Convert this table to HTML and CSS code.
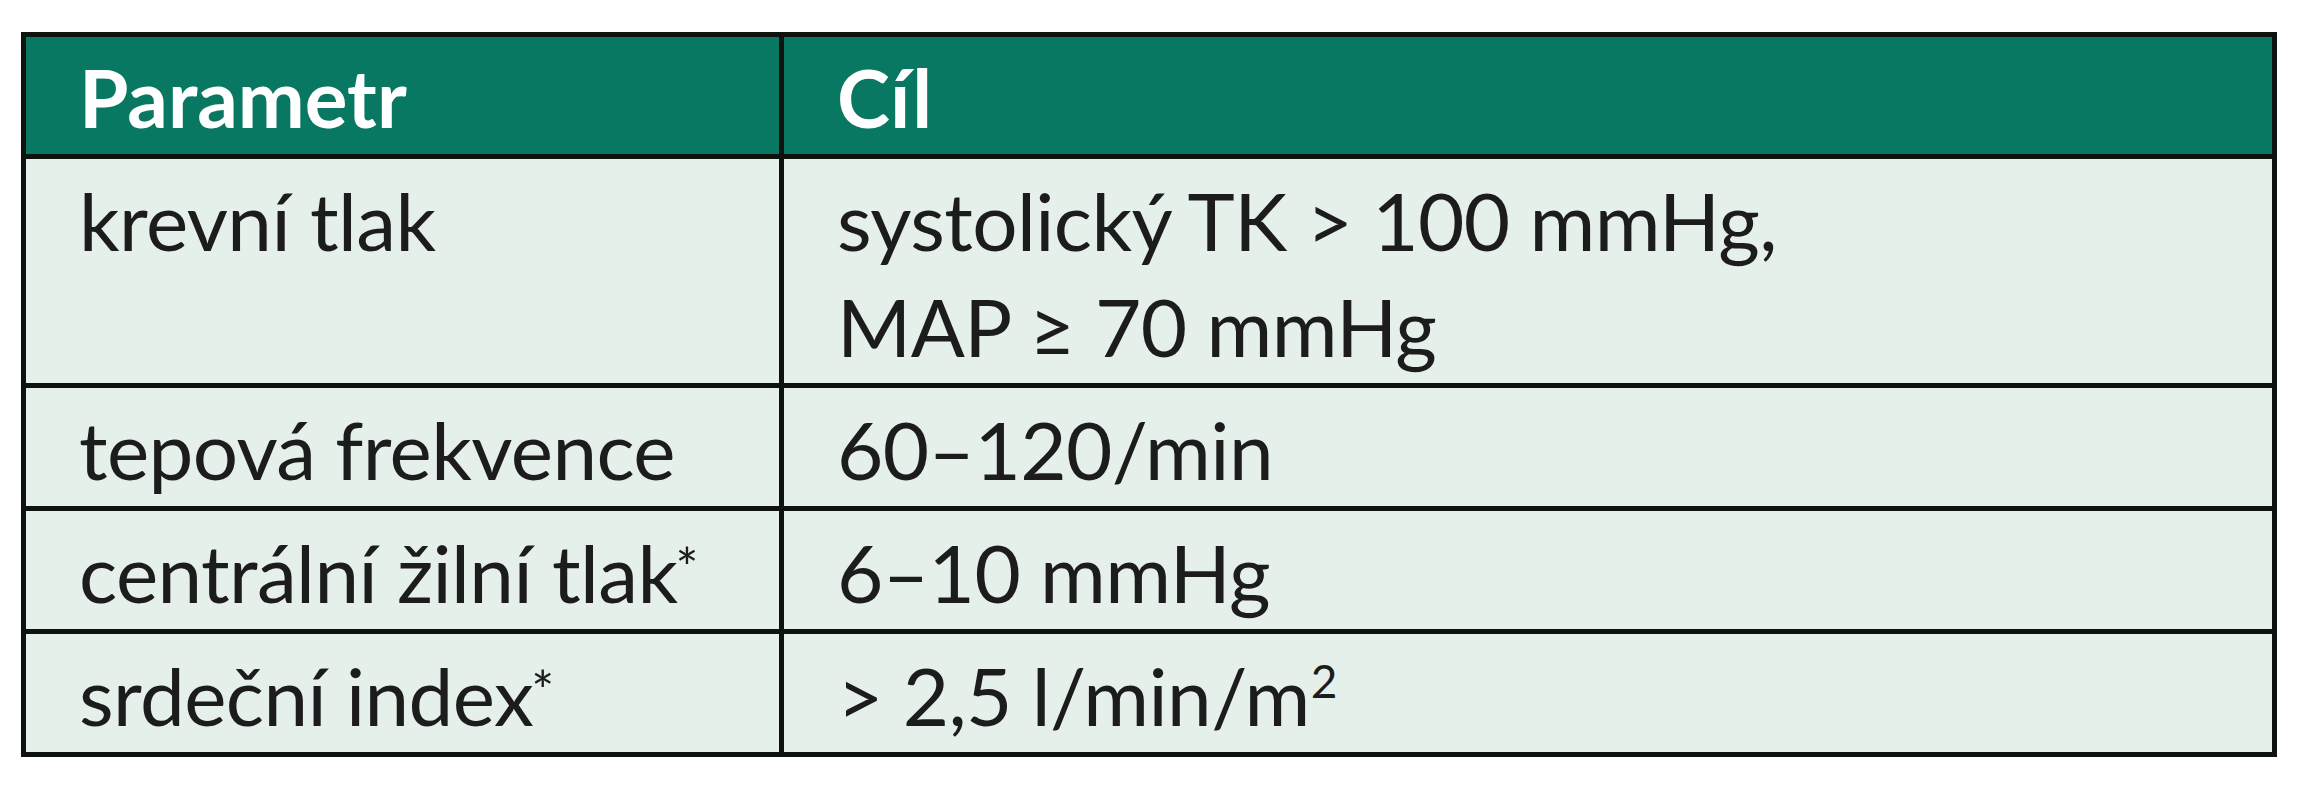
FILE: index.html
```html
<!DOCTYPE html>
<html lang="cs">
<head>
<meta charset="utf-8">
<title>Parametr – Cíl</title>
<link rel="stylesheet" href="styles.css">
</head>
<body>
<div class="table">
  <div class="cell head">Parametr</div>
  <div class="cell head">Cíl</div>
  <div class="cell">krevní tlak</div>
  <div class="cell">systolický TK &gt; 100 mmHg,<br>MAP ≥ 70 mmHg</div>
  <div class="cell">tepová frekvence</div>
  <div class="cell">60–120/min</div>
  <div class="cell">centrální žilní tlak<span class="ast">*</span></div>
  <div class="cell">6–10 mmHg</div>
  <div class="cell">srdeční index<span class="ast">*</span></div>
  <div class="cell">&gt; 2,5 l/min/m<sup class="sq">2</sup></div>
</div>
</body>
</html>
```
FILE: styles.css
```css
html, body {
  margin: 0;
  padding: 0;
  background: #ffffff;
}

body {
  padding: 32px 0 0 21px;
  font-family: Lato, "Open Sans", "Liberation Sans", sans-serif;
}

.table {
  width: 2256px;
  box-sizing: border-box;
  display: grid;
  grid-template-columns: 753px 1fr;
  gap: 5px;
  padding: 5px;
  background: #0f130f;
}

.cell {
  background: #e6f0eb;
  color: #1c1c1c;
  font-size: 80px;
  line-height: 106px;
  letter-spacing: -0.6px;
  padding: 8px 53px 4px 53px;
  min-height: 106px;
}

.cell.head {
  background: #097862;
  color: #ffffff;
  font-weight: 700;
  letter-spacing: 0;
  padding: 7px 53px 4px 53px;
}

.ast {
  font-size: 54px;
  line-height: 0;
  vertical-align: 16px;
  margin-left: -2px;
}

.sq {
  font-size: 46px;
  line-height: 0;
  vertical-align: 28px;
  margin-left: 1px;
}
```
